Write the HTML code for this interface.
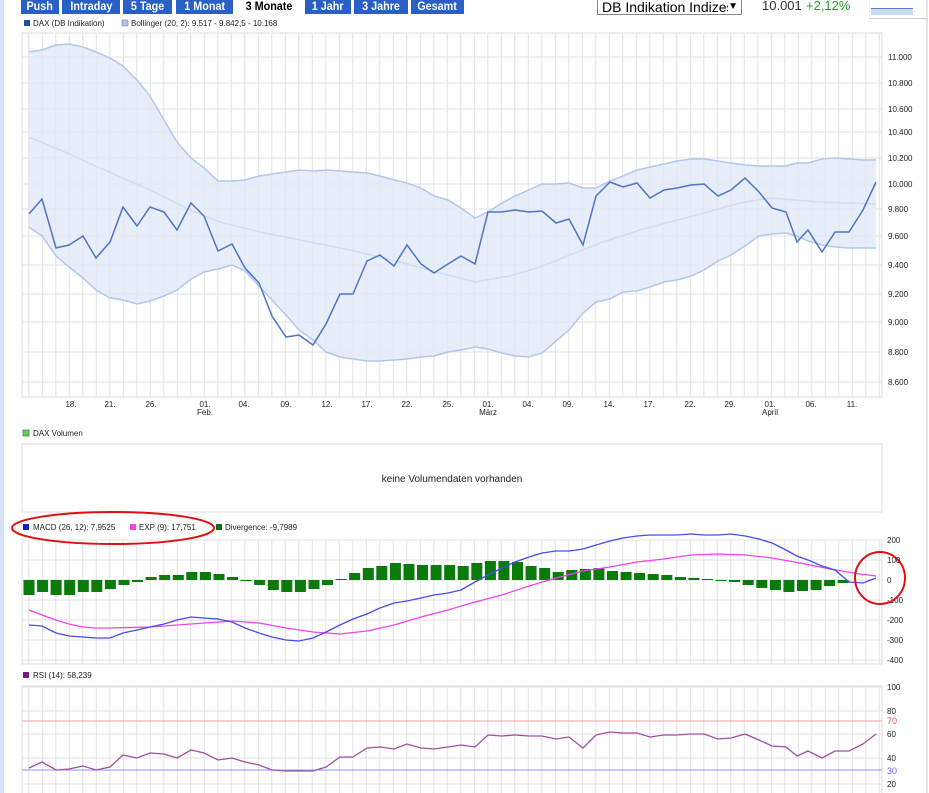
<!DOCTYPE html>
<html><head><meta charset="utf-8"><style>
body{margin:0;width:929px;height:793px;overflow:hidden;background:#fff;font-family:"Liberation Sans",sans-serif;position:relative}
.tab{position:absolute;top:0;height:14px;background:#2a5fc4;color:#fff;font-weight:bold;font-size:12px;line-height:12px;text-align:center;font-family:"Liberation Sans",sans-serif;overflow:hidden}
.tab span{display:inline-block;transform:scaleX(.9)}
.sel{background:#fff;color:#000}
</style></head><body>
<div style="position:absolute;left:0;top:0;width:4px;height:793px;background:#d4e3f8"></div>
<div class="tab" style="left:21px;width:38px"><span>Push</span></div>
<div class="tab" style="left:62px;width:58px"><span>Intraday</span></div>
<div class="tab" style="left:123px;width:49px"><span>5 Tage</span></div>
<div class="tab" style="left:176px;width:57px"><span>1 Monat</span></div>
<div class="tab sel" style="left:235px;width:68px"><span>3 Monate</span></div>
<div class="tab" style="left:305px;width:46px"><span>1 Jahr</span></div>
<div class="tab" style="left:354px;width:54px"><span>3 Jahre</span></div>
<div class="tab" style="left:411px;width:53px"><span>Gesamt</span></div>
<div style="position:absolute;left:597px;top:-2px;width:145px;height:17px;border:1px solid #888;font-size:14px;line-height:16px;padding-left:4px;box-sizing:border-box;white-space:nowrap;overflow:hidden">DB Indikation Indizes<span style="position:absolute;right:3px;top:0;background:#fff;font-size:10px">&#9660;</span></div>
<div style="position:absolute;left:762px;top:-2px;font-size:13px;color:#333">10.001</div>
<div style="position:absolute;left:806px;top:-2px;font-size:13px;color:#2a9a2a">+2,12%</div>
<div style="position:absolute;left:869px;top:0;width:58px;height:18px;border-bottom:1px solid #ccc;border-left:1px solid #eee"><div style="position:absolute;left:1px;top:8px;width:42px;height:6px;background:#c9d9f2;border-top:1px solid #5a80c8"></div></div>
<svg id="s" width="929" height="793" style="position:absolute;left:0;top:0" font-family="Liberation Sans, sans-serif"></svg>
<script>
var s='';
function L(x1,y1,x2,y2,c,w){s+='<line x1="'+x1+'" y1="'+y1+'" x2="'+x2+'" y2="'+y2+'" stroke="'+c+'" stroke-width="'+(w||1)+'"/>';}
function T(x,y,t,sz,c,a){s+='<text x="'+x+'" y="'+y+'" font-size="'+sz+'" fill="'+(c||'#000')+'"'+(a?' text-anchor="'+a+'"':'')+'>'+t+'</text>';}
function P(pts){return pts.map(function(p){return p[0]+','+p[1]}).join(' ');}
function grid(t,b){for(var x=28.8;x<880;x+=13.5)L(x.toFixed(1),t,x.toFixed(1),b,'#e2e2e2');}
var X0=22,X1=882;
s+='<rect x="24" y="20" width="6" height="6" fill="#1f4fa8"/>';T(33,26,'DAX (DB Indikation)',8,'#222');
s+='<rect x="122" y="20" width="6" height="6" fill="#b0c4e8" stroke="#5a78b8" stroke-width=".5"/>';T(131,26,'Bollinger (20, 2): 9.517 - 9.842,5 - 10.168',8,'#222');
s+='<rect x="'+X0+'" y="33" width="'+(X1-X0)+'" height="364" fill="#fff" stroke="#ddd"/>';
grid(33,397);
var ys=[[57,'11.000'],[83,'10.800'],[109,'10.600'],[132,'10.400'],[158,'10.200'],[184,'10.000'],[209,'9.800'],[236,'9.600'],[265,'9.400'],[294,'9.200'],[322,'9.000'],[352,'8.800'],[382,'8.600']];
ys.forEach(function(v){L(X0,v[0],X1,v[0],'#e2e2e2');T(888,v[0]+3,v[1],8,'#222');});
var up=[[29,52],[42,50],[56,45],[69,44],[83,47],[96,52],[110,58],[123,66],[137,80],[150,96],[164,120],[177,142],[191,158],[204,168],[218,181],[232,181],[245,180],[259,176],[272,174],[286,172],[299,170],[313,171],[326,170],[340,171],[353,172],[367,173],[380,176],[394,180],[407,183],[421,188],[434,196],[448,200],[461,208],[475,218],[488,212],[502,203],[515,196],[529,190],[542,184],[556,184],[569,183],[583,188],[596,188],[610,181],[623,176],[637,170],[650,167],[664,164],[677,161],[691,159],[704,159],[718,161],[731,163],[745,165],[759,166],[772,166],[786,166],[797,163],[808,163],[822,159],[835,158],[849,159],[863,160],[876,160]];
var lo=[[29,227],[42,236],[56,256],[69,267],[83,278],[96,290],[110,298],[123,300],[137,304],[150,301],[164,296],[177,290],[191,279],[204,272],[218,269],[232,265],[245,271],[259,286],[272,300],[286,315],[299,330],[313,340],[326,352],[340,357],[353,359],[367,361],[380,361],[394,360],[407,359],[421,357],[434,356],[448,352],[461,350],[475,347],[488,349],[502,353],[515,356],[529,357],[542,353],[556,341],[569,330],[583,313],[596,302],[610,299],[623,292],[637,291],[650,287],[664,282],[677,280],[691,276],[704,270],[718,261],[731,255],[745,246],[759,236],[772,234],[786,233],[797,236],[808,241],[822,245],[835,247],[849,248],[863,248],[876,248]];
s+='<polygon points="'+P(up)+' '+P(lo.slice().reverse())+'" fill="#dfe8f8" fill-opacity=".75"/>';
s+='<polyline points="'+P(up)+'" fill="none" stroke="#b4c6ea" stroke-width="1.5"/>';
s+='<polyline points="'+P(lo)+'" fill="none" stroke="#b4c6ea" stroke-width="1.5"/>';
var mid=[[29,137],[60,150],[100,168],[150,190],[190,210],[220,222],[260,232],[300,240],[350,250],[400,262],[440,273],[475,282],[510,276],[540,267],[570,255],[600,243],[640,230],[700,214],[740,203],[770,198],[820,202],[876,204]];
s+='<polyline points="'+P(mid)+'" fill="none" stroke="#d0dcf2" stroke-width="1.5"/>';
var dax=[[29,214],[42,199],[56,248],[69,245],[83,236],[96,258],[110,242],[123,207],[137,226],[150,207],[164,212],[177,230],[191,203],[204,216],[218,251],[232,244],[245,268],[259,283],[272,316],[286,337],[299,335],[313,345],[326,324],[340,294],[353,294],[367,261],[380,255],[394,266],[407,245],[421,264],[434,273],[448,264],[461,256],[475,264],[488,212],[502,212],[515,210],[529,212],[542,211],[556,223],[569,219],[583,245],[596,196],[610,182],[623,187],[637,183],[650,198],[664,190],[677,188],[691,185],[704,184],[718,196],[731,190],[745,178],[759,192],[772,208],[786,212],[797,242],[808,230],[822,252],[835,232],[849,232],[863,210],[876,182]];
s+='<polyline points="'+P(dax)+'" fill="none" stroke="#4f73c4" stroke-width="1.5"/>';
[[71,'18.'],[110,'21.'],[151,'26.'],[205,'01.'],[244,'04.'],[286,'09.'],[327,'12.'],[367,'17.'],[407,'22.'],[448,'25.'],[488,'01.'],[528,'04.'],[568,'09.'],[609,'14.'],[649,'17.'],[690,'22.'],[730,'29.'],[770,'01.'],[811,'06.'],[852,'11.']].forEach(function(v){T(v[0],407,v[1],8,'#222','middle');});
T(205,415,'Feb.',8,'#222','middle');T(488,415,'März',8,'#222','middle');T(770,415,'April',8,'#222','middle');
s+='<rect x="23" y="430" width="6" height="6" fill="#66cc66" stroke="#2a8a2a" stroke-width=".7"/>';T(33,436,'DAX Volumen',8,'#222');
s+='<rect x="'+X0+'" y="444" width="'+(X1-X0)+'" height="68" fill="#fff" stroke="#ddd"/>';
T(452,482,'keine Volumendaten vorhanden',10,'#222','middle');
s+='<rect x="23" y="524" width="6" height="6" fill="#1020d0"/>';T(33,530,'MACD (26, 12): 7,9525',8,'#222');
s+='<rect x="130" y="524" width="6" height="6" fill="#ee44ee"/>';T(139,530,'EXP (9): 17,751',8,'#222');
s+='<rect x="216" y="524" width="6" height="6" fill="#107010"/>';T(225,530,'Divergence: -9,7989',8,'#222');
s+='<rect x="'+X0+'" y="540" width="'+(X1-X0)+'" height="124" fill="#fff" stroke="#ddd"/>';
grid(540,664);
[[540,'200'],[560,'100'],[580,'0'],[600,'-100'],[620,'-200'],[640,'-300'],[660,'-400']].forEach(function(v){L(X0,v[0],X1,v[0],'#e2e2e2');T(887,v[0]+3,v[1],8,'#222');});
var hb=[-15,-12,-15,-15,-12,-12,-9,-5,-2,3,5,5,8,8,6,3,-1,-5,-10,-12,-12,-9,-5,1,7,12,14,17,16,15,15,15,14,17,19,19,18,14,12,8,10,11,12,9,8,7,6,5,3,2,1,0,-2,-5,-8,-10,-12,-11,-10,-6,-3];
hb.forEach(function(h,i){var x=23.5+i*13.57;var y=h>0?580-h:580;s+='<rect x="'+x.toFixed(1)+'" y="'+y+'" width="11" height="'+Math.max(Math.abs(h),1)+'" fill="#0a7a0a"/>';});
var bl=[[29,625],[42,626],[56,633],[69,636],[83,637],[96,638],[110,638],[123,633],[137,630],[150,627],[164,624],[177,620],[191,617],[204,618],[218,619],[232,622],[245,628],[259,633],[272,637],[286,640],[299,641],[313,638],[326,632],[340,625],[353,619],[367,614],[380,608],[394,603],[407,601],[421,598],[434,595],[448,593],[461,590],[475,582],[488,575],[502,568],[515,562],[529,557],[542,553],[556,551],[569,551],[583,549],[596,545],[610,541],[623,538],[637,536],[650,535],[664,535],[677,535],[691,534],[704,535],[718,535],[731,534],[745,536],[759,539],[772,543],[786,550],[797,556],[808,560],[822,566],[835,570],[849,582],[863,583],[876,578]];
var pk=[[29,610],[42,615],[56,620],[69,624],[83,627],[96,628],[110,628],[150,627],[191,624],[232,621],[259,623],[286,628],[313,632],[340,634],[367,631],[394,625],[421,617],[448,610],[475,602],[502,595],[529,586],[556,578],[583,571],[610,567],[637,562],[664,559],[691,555],[718,554],[745,555],[772,558],[800,563],[830,569],[860,574],[876,576]];
s+='<polyline points="'+P(pk)+'" fill="none" stroke="#ee44ee" stroke-width="1.3"/>';
s+='<polyline points="'+P(bl)+'" fill="none" stroke="#4a4aee" stroke-width="1.3"/>';
s+='<ellipse cx="113" cy="528" rx="101" ry="16" fill="none" stroke="#e01010" stroke-width="2"/>';
s+='<ellipse cx="880" cy="578" rx="25" ry="26" fill="none" stroke="#e01010" stroke-width="2"/>';
s+='<rect x="23" y="672" width="6" height="6" fill="#702070"/>';T(33,678,'RSI (14): 58,239',8,'#222');
s+='<rect x="'+X0+'" y="686" width="'+(X1-X0)+'" height="120" fill="#fff" stroke="#ddd"/>';
grid(686,800);
[[687,'100'],[711,'80'],[734,'60'],[758,'40'],[784,'20']].forEach(function(v){L(X0,v[0],X1,v[0],'#e2e2e2');T(887,v[0]+3,v[1],8,'#222');});
L(X0,721,X1,721,'#f0a0a0');T(887,724,'70',9,'#e05050');
L(X0,770,X1,770,'#9090ff');T(887,774,'30',9,'#6060ff');
var rsi=[[29,768],[42,762],[56,770],[69,769],[83,766],[96,770],[110,767],[123,755],[137,758],[150,753],[164,754],[177,758],[191,750],[204,753],[218,760],[232,758],[245,762],[259,765],[272,770],[286,771],[299,771],[313,771],[326,767],[340,757],[353,757],[367,748],[380,747],[394,749],[407,744],[421,748],[434,749],[448,747],[461,745],[475,747],[488,735],[502,736],[515,735],[529,736],[542,736],[556,739],[569,737],[583,748],[596,735],[610,732],[623,733],[637,733],[650,737],[664,735],[677,735],[691,734],[704,734],[718,739],[731,738],[745,734],[759,740],[772,746],[786,747],[797,756],[808,751],[822,758],[835,751],[849,751],[863,744],[876,734]];
s+='<polyline points="'+P(rsi)+'" fill="none" stroke="#a050a0" stroke-width="1.3"/>';
L(927,0,927,793,'#ccc');
document.getElementById('s').innerHTML=s;
</script>
</body></html>
